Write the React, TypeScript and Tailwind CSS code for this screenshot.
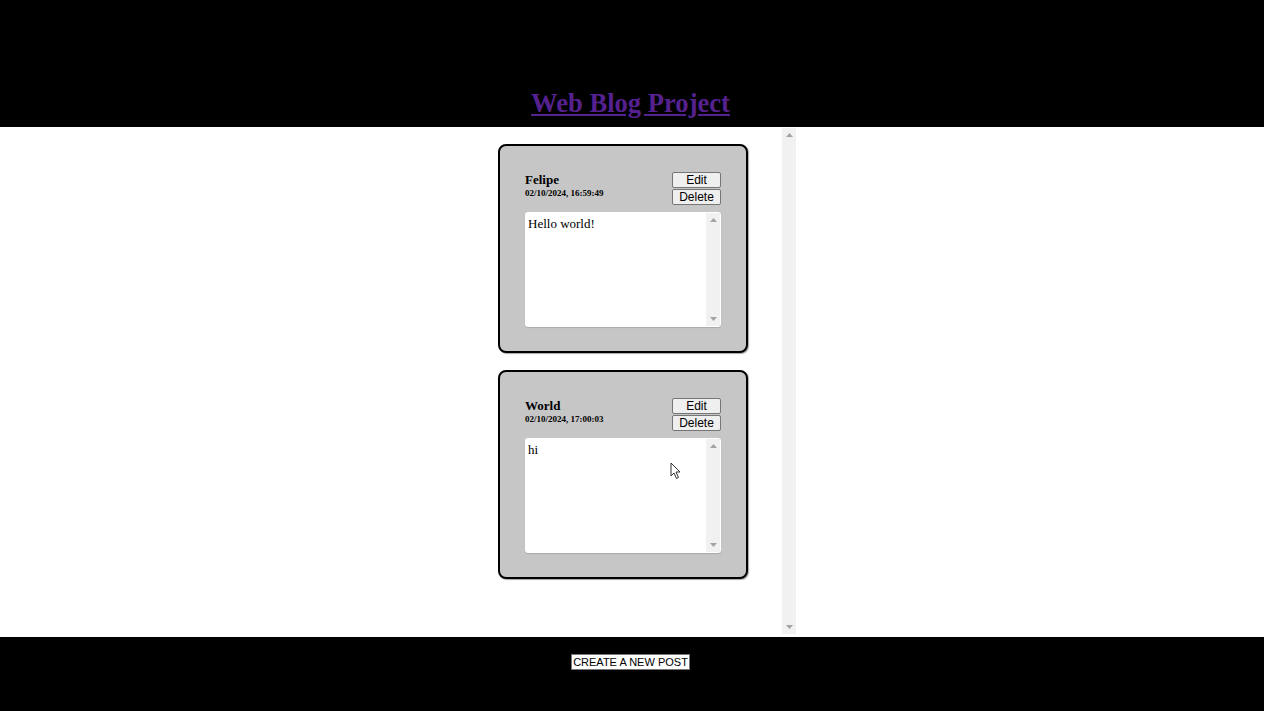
import React from "react";

function FakeScrollbar({ className }: { className: string }) {
  return (
    <div className={"flex flex-col items-center justify-between bg-[#f1f1f1] " + className}>
      <svg width="7" height="4" viewBox="0 0 7 4" className="mt-[5px]">
        <polygon points="3.5,0 7,4 0,4" fill="#a3a3a3" />
      </svg>
      <svg width="7" height="4" viewBox="0 0 7 4" className="mb-[5px]">
        <polygon points="0,0 7,0 3.5,4" fill="#a3a3a3" />
      </svg>
    </div>
  );
}

function Post({ name, date, text, cursor }: { name: string; date: string; text: string; cursor?: boolean }) {
  return (
    <div className="w-[250px] h-[209px] border-2 border-black rounded-[8px] bg-[#c6c6c6] px-[25px] pt-[26px] pb-[24px] flex flex-col shadow-[1px_1px_1px_rgba(0,0,0,0.35)]">
      <div className="flex justify-between h-[33px]">
        <div className="flex flex-col font-['Liberation_Serif',serif] font-bold text-black">
          <div className="text-[13px] leading-[15px]">{name}</div>
          <div className="text-[9px] leading-[11px] mt-[1px]">{date}</div>
        </div>
        <div className="flex flex-col gap-[1px] w-[49px]">
          {["Edit", "Delete"].map((l) => (
            <button
              key={l}
              className="h-[16px] w-[49px] bg-[#efefef] border border-[#767676] rounded-[2px] font-['Liberation_Sans',Arial,sans-serif] text-[12px] leading-[14px] text-black flex items-center justify-center"
            >
              {l}
            </button>
          ))}
        </div>
      </div>
      <div className="relative mt-[7px] h-[115px] w-[196px] bg-white rounded-[3px] flex shadow-[0_1px_1px_rgba(0,0,0,0.15)]">
        <div className="flex-1 px-[3px] pt-[4px] font-['Liberation_Serif',serif] text-[13px] leading-[15px] text-black">{text}</div>
        <FakeScrollbar className="w-[14px] my-[1px] mr-[1px]" />
        {cursor && (
          <svg width="12" height="18" viewBox="0 0 12 18" className="absolute left-[145px] top-[24px]">
            <path d="M1 1 L1 14 L4 11 L6.5 16.5 L8.5 15.5 L6 10 L10 10 Z" fill="white" stroke="#333" strokeWidth="1" strokeLinejoin="round" />
          </svg>
        )}
      </div>
    </div>
  );
}

export default function App() {
  return (
    <div className="h-[711px] w-full flex flex-col bg-white">
      <header className="h-[127px] bg-black flex items-end justify-center pb-[8px] pr-[3px]">
        <h1 className="font-['Liberation_Serif',serif] font-bold text-[26.6px] leading-[31px]">
          <a href="#" className="text-[#55218f] underline">Web Blog Project</a>
        </h1>
      </header>
      <main className="h-[510px] flex justify-center">
        <div className="w-[328px] h-[506px] mt-px flex">
          <div className="flex-1 flex flex-col gap-[17px] pt-[16px] pl-[30px]">
            <Post name="Felipe" date="02/10/2024, 16:59:49" text="Hello world!" />
            <Post name="World" date="02/10/2024, 17:00:03" text="hi" cursor />
          </div>
          <FakeScrollbar className="w-[14px] h-full" />
        </div>
      </main>
      <footer className="flex-1 bg-black flex justify-center pt-[17px] pr-[3px]">
        <button className="h-[16px] px-[1px] bg-white border border-[#767676] font-['Liberation_Sans',Arial,sans-serif] text-[11px] leading-[14px] text-black">
          CREATE A NEW POST
        </button>
      </footer>
    </div>
  );
}
